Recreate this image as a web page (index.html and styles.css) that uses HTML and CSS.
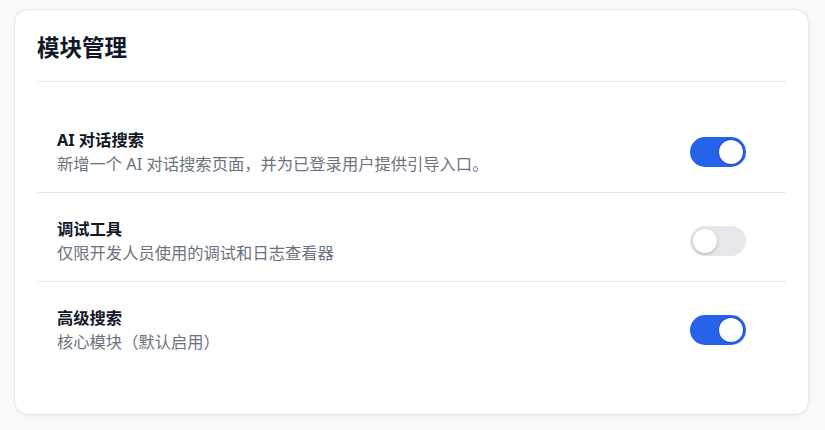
FILE: index.html
```html
<!DOCTYPE html>
<html lang="zh-CN">
<head>
    <meta charset="UTF-8">
    <meta name="viewport" content="width=device-width, initial-scale=1.0">
    <title>模块管理</title>
    <link rel="stylesheet" href="styles.css">
</head>
<body>
    <div class="card">
        <div class="card-header">
            <h2>模块管理</h2>
        </div>
        <ul class="module-list">
            <li class="module-row">
                <div class="module-info">
                    <div class="module-name">AI 对话搜索</div>
                    <div class="module-desc">新增一个 AI 对话搜索页面，并为已登录用户提供引导入口。</div>
                </div>
                <label class="switch">
                    <input type="checkbox" checked>
                    <span class="slider"></span>
                </label>
            </li>
            <li class="module-row">
                <div class="module-info">
                    <div class="module-name">调试工具</div>
                    <div class="module-desc">仅限开发人员使用的调试和日志查看器</div>
                </div>
                <label class="switch">
                    <input type="checkbox">
                    <span class="slider"></span>
                </label>
            </li>
            <li class="module-row">
                <div class="module-info">
                    <div class="module-name">高级搜索</div>
                    <div class="module-desc">核心模块（默认启用）</div>
                </div>
                <label class="switch">
                    <input type="checkbox" checked>
                    <span class="slider"></span>
                </label>
            </li>
        </ul>
    </div>
</body>
</html>
```

FILE: styles.css
```css
body {
    margin: 0;
    padding: 9px 16px 9px 14px;
    background-color: #f9f9fa;
    font-family: "Noto Sans", "Noto Sans CJK SC", sans-serif;
    color: #111827;
}
.card {
    background-color: #fff;
    border: 1px solid #e5e7eb;
    border-radius: 14px;
    padding: 22px;
    box-shadow: 0 1px 4px rgba(0, 0, 0, 0.05);
}
.card-header {
    padding-bottom: 17px;
    border-bottom: 1px solid #e5e7eb;
}
.card-header h2 {
    margin: 0;
    font-size: 22.5px;
    line-height: 32px;
    font-weight: 700;
}
.module-list {
    list-style: none;
    margin: 0;
    padding: 22px 0 22px;
}
.module-row {
    display: flex;
    align-items: center;
    justify-content: space-between;
    padding: 24px 40px 16px 20px;
    border-bottom: 1px solid #e5e7eb;
}
.module-row:last-child {
    border-bottom: none;
}
.module-name {
    font-size: 16.3px;
    line-height: 24px;
    font-weight: 700;
}
.module-desc {
    font-size: 16.3px;
    line-height: 24px;
    color: #6b7280;
}
.switch {
    position: relative;
    display: inline-block;
    width: 56px;
    height: 30px;
    flex-shrink: 0;
}
.switch input {
    opacity: 0;
    width: 0;
    height: 0;
}
.slider {
    position: absolute;
    inset: 0;
    background-color: #e5e7eb;
    border-radius: 15px;
    cursor: pointer;
}
.slider::before {
    content: "";
    position: absolute;
    top: 3px;
    left: 3px;
    width: 24px;
    height: 24px;
    background-color: #fff;
    border-radius: 50%;
    box-shadow: 0 1px 3px rgba(0, 0, 0, 0.25);
}
.switch input:checked + .slider {
    background-color: #2563eb;
}
.switch input:checked + .slider::before {
    left: 29px;
    box-shadow: 0 0 0 1px #1d4ed8;
}
```
